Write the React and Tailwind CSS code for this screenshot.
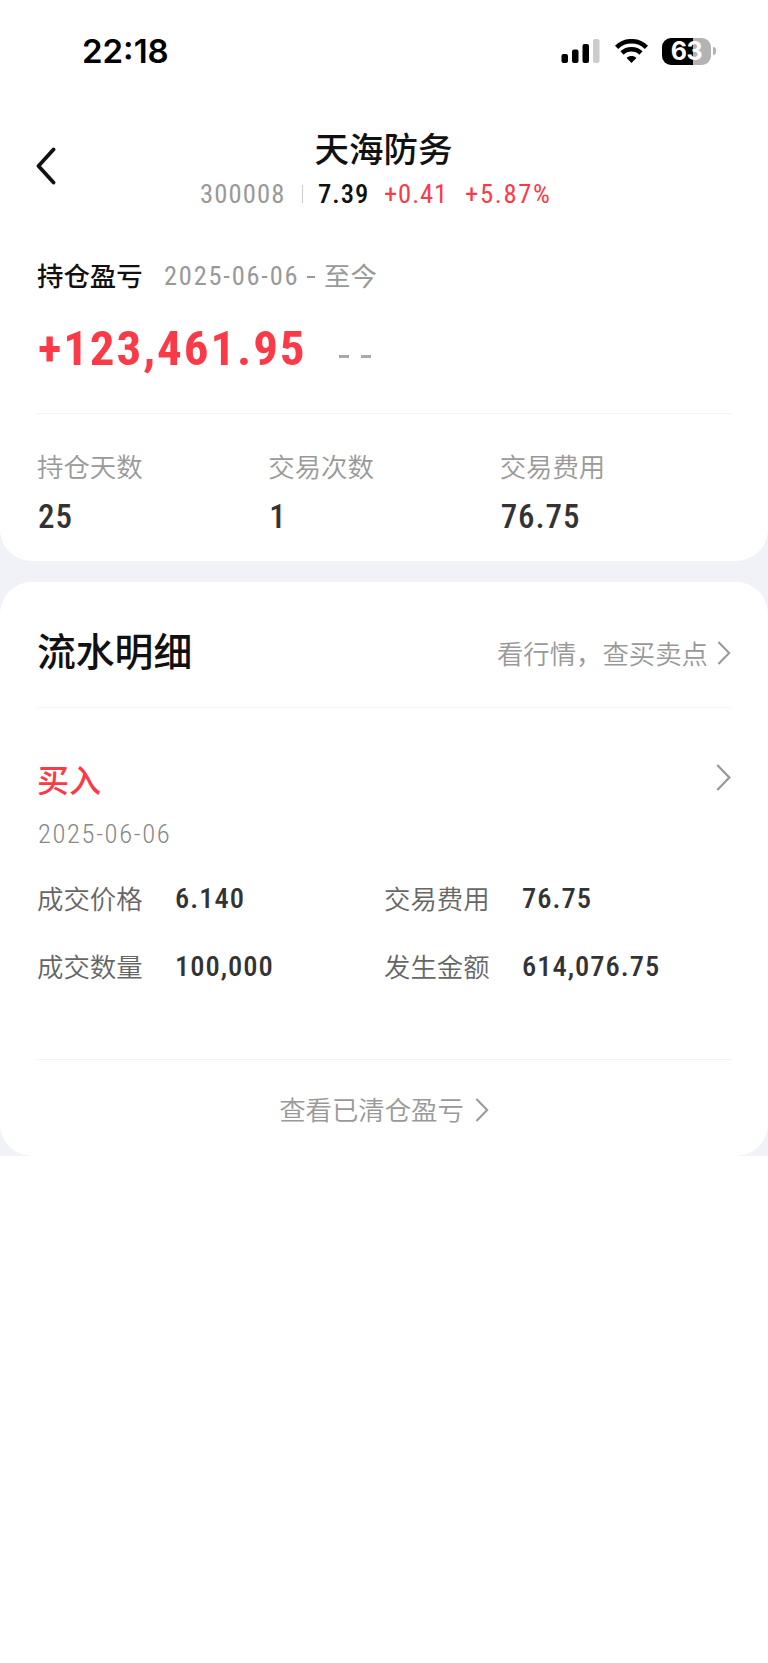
const stats = [
  { label: "持仓天数", value: "25" },
  { label: "交易次数", value: "1" },
  { label: "交易费用", value: "76.75" },
];

const details = [
  { label: "成交价格", value: "6.140" },
  { label: "交易费用", value: "76.75" },
  { label: "成交数量", value: "100,000" },
  { label: "发生金额", value: "614,076.75" },
];

function Num({ className = "", children }) {
  return (
    <span className={`font-[Roboto,'Noto_Sans_CJK_SC',sans-serif] [font-stretch:85%] whitespace-nowrap pt-[2px] ${className}`}>
      {children}
    </span>
  );
}

function Chevron({ className = "" }) {
  return (
    <svg viewBox="0 0 14 26" className={className} fill="none" stroke="currentColor" strokeWidth="2.2">
      <path d="M1 1 L12.6 13 L1 25" />
    </svg>
  );
}

function StatusBar() {
  return (
    <div className="flex h-[102px] items-center justify-between pl-[82px] pr-[52px]">
      <span className="font-[Inter,sans-serif] text-[33px] font-semibold leading-none text-black">
        22:18
      </span>
      <div className="flex items-center">
        <svg className="h-6 w-10" viewBox="0 0 40 24">
          <rect x="0.5" y="15" width="6.5" height="9" rx="2" />
          <rect x="11" y="10.5" width="6.5" height="13.5" rx="2" />
          <rect x="21.5" y="5" width="6.5" height="19" rx="2" />
          <rect x="32" y="0" width="6.5" height="24" rx="2" fill="#cccccc" />
        </svg>
        <svg className="ml-[14px] h-6 w-[33px]" viewBox="0 0 33 24">
          <g fill="none" stroke="#000" strokeWidth="4.6">
            <path d="M1.6 8.4 C9.8 0.2 23.2 0.2 31.4 8.4" />
            <path d="M7 14 C12.2 8.9 20.8 8.9 26 14" />
          </g>
          <path d="M16.5 24 L11.6 19 C14.4 16.4 18.6 16.4 21.4 19 Z" />
        </svg>
        <div className="ml-[14px] flex h-[27px] w-[49px] items-center justify-center rounded-[9px] bg-[linear-gradient(to_right,#000_31px,#b3b3b3_31px)]">
          <span className="pt-px font-[Inter,sans-serif] text-[25px] font-bold leading-none tracking-[-0.4px] text-white">
            63
          </span>
        </div>
        <div className="ml-[2px] h-2 w-[3px] rounded-r-full bg-[#b3b3b3]" />
      </div>
    </div>
  );
}

function Header() {
  return (
    <div className="flex h-[126px] items-start">
      <div className="w-[200px] pl-[36px] pt-[45px]">
        <svg className="h-[38px] w-5" viewBox="0 0 20 38" fill="none" stroke="#111" strokeWidth="3.8" strokeLinecap="round" strokeLinejoin="round">
          <path d="M17.5 2.5 L2.5 19 L17.5 35.5" />
        </svg>
      </div>
      <div className="w-[352px] pt-[24px]">
        <h1 className="flex h-[42px] items-center justify-center pl-[15px] text-[34.5px] font-medium leading-none text-[#111]">
          天海防务
        </h1>
        <div className="flex h-[51px] items-center text-[26.6px] leading-none">
          <Num className="w-[102px] tracking-[1.1px] text-[#999]">300008</Num>
          <span className="h-[18px] w-px bg-[#ccc]" />
          <Num className="ml-[15px] w-[66px] font-medium tracking-[1px] text-[#111]">7.39</Num>
          <Num className="w-[81px] tracking-[0.9px] text-[#fb3a48]">+0.41</Num>
          <Num className="tracking-[1.7px] text-[#fb3a48]">+5.87%</Num>
        </div>
      </div>
    </div>
  );
}

function Summary() {
  return (
    <section className="rounded-b-[32px] bg-white">
      <StatusBar />
      <Header />
      <div className="px-[37px]">
        <div className="flex h-[94px] items-center text-[26.4px] leading-none">
          <h2 className="w-[127px] font-medium text-[#111]">持仓盈亏</h2>
          <Num className="w-[143px] tracking-[1.8px] text-[#999]">2025-06-06</Num>
          <span className="mt-1 h-[2.5px] w-2 bg-[#999]" />
          <span className="ml-[9px] text-[#999]">至今</span>
        </div>
        <div className="flex h-[50px] items-center">
          <Num className="w-[302px] pl-px text-[49px] font-bold leading-none tracking-[1.9px] text-[#fb3a48]">+123,461.95</Num>
          <span className="mt-[18px] h-[3px] w-[10px] bg-[#aaa]" />
          <span className="ml-3 mt-[18px] h-[3px] w-[10px] bg-[#aaa]" />
        </div>
        <div className="mt-[41px] h-px bg-[#f2f2f2]" />
        <div className="grid h-[147px] grid-cols-3 pt-[28px]">
          {stats.map((s) => (
            <div key={s.label}>
              <div className="flex h-[49px] items-center text-[26.4px] font-[350] leading-none text-[#999]">{s.label}</div>
              <div className="flex h-[49px] items-center">
                <Num className="pl-px text-[33px] font-medium leading-none tracking-[0.9px] text-[#333]">{s.value}</Num>
              </div>
            </div>
          ))}
        </div>
      </div>
    </section>
  );
}

function Flow() {
  return (
    <section className="mt-[21px] h-[574px] rounded-[32px] bg-white px-[37px]">
      <div className="flex h-[125px] items-center justify-between pt-[14px]">
        <h2 className="mb-[5px] text-[38.8px] font-medium leading-none text-[#111]">流水明细</h2>
        <div className="mt-[3px] flex items-center text-[#999]">
          <span className="text-[26.4px] font-[350] leading-none">看行情，查买卖点</span>
          <Chevron className="ml-[9px] h-6 w-[14px]" />
        </div>
      </div>
      <div className="h-px bg-[#f4f4f4]" />

      <div className="h-[351px] pt-[47px]">
        <div className="flex h-[50px] items-center justify-between">
          <span className="mb-[4px] text-[32px] font-medium leading-none text-[#fb3a48]">买入</span>
          <Chevron className="mb-[6px] h-[27px] w-[15px] text-[#999]" />
        </div>
        <div className="flex h-[56px] items-center">
          <Num className="pl-px text-[26.6px] font-light leading-none tracking-[1.6px] text-[#888]">2025-06-06</Num>
        </div>
        <div className="mt-[3px] grid grid-cols-2">
          {details.map((d) => (
            <div key={d.label} className="flex h-[68px] items-center">
              <span className="w-[137px] pt-px text-[26.4px] font-[350] leading-none text-[#666]">{d.label}</span>
              <Num className="pl-px text-[28.5px] font-medium leading-none tracking-[1px] text-[#333]">{d.value}</Num>
            </div>
          ))}
        </div>
      </div>

      <div className="h-px bg-[#f2f2f2]" />
      <div className="flex h-[96px] items-center justify-center pt-[3px] text-[#999]">
        <span className="mb-px text-[26.4px] font-[350] leading-none">查看已清仓盈亏</span>
        <Chevron className="ml-[11px] h-6 w-[14px]" />
      </div>
    </section>
  );
}

export default function App() {
  return (
    <div className="min-h-[1663px] w-[768px] bg-white font-['Noto_Sans_CJK_SC',sans-serif]">
      <div className="bg-[#f1f2f7]">
        <Summary />
        <Flow />
      </div>
    </div>
  );
}
